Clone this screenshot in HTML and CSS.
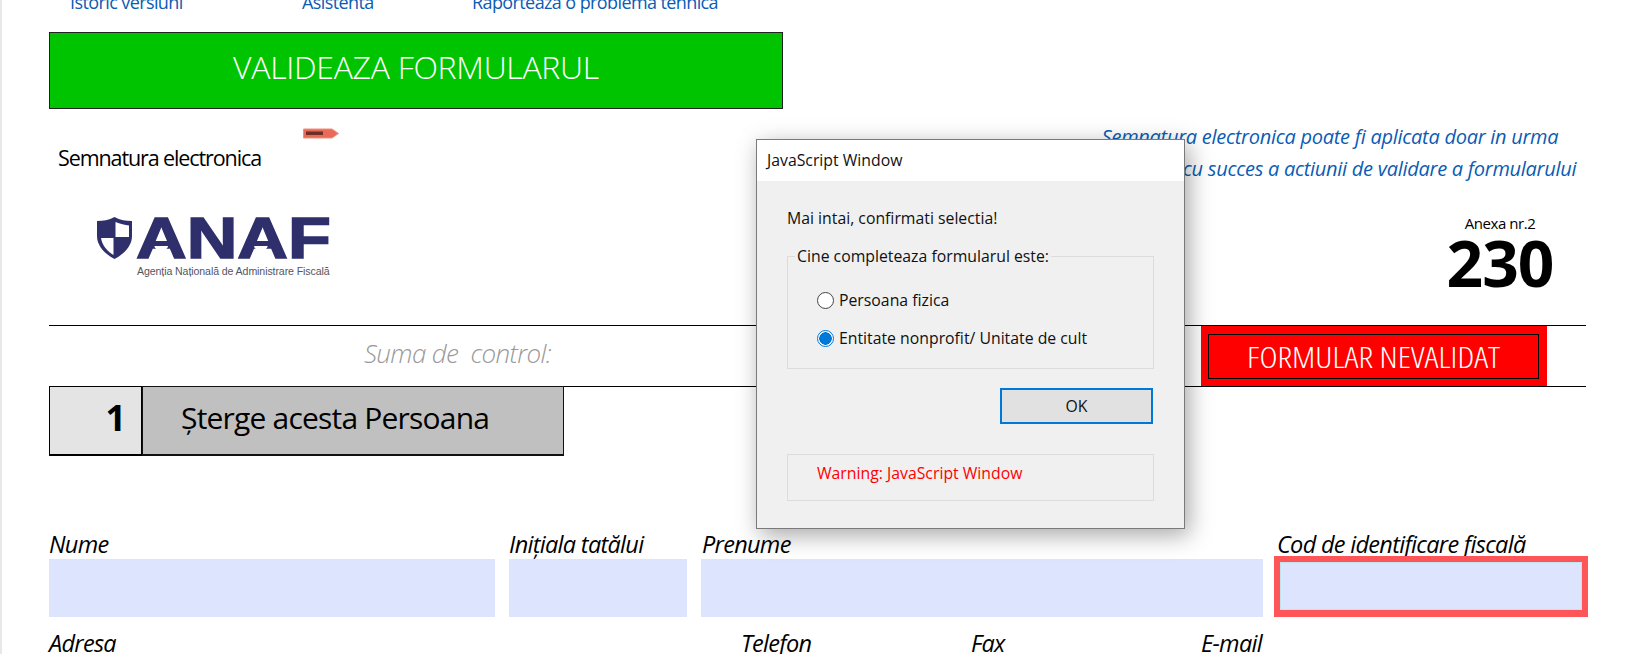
FILE: index.html
```html
<!DOCTYPE html>
<html lang="ro">
<head>
<meta charset="utf-8">
<title>Formular 230</title>
<link rel="stylesheet" href="styles.css">
</head>
<body>
<div class="page">
  <nav class="links">
    <a class="link link-a">Istoric versiuni</a>
    <a class="link link-b">Asistenta</a>
    <a class="link link-c">Raporteaza o problema tehnica</a>
  </nav>
  <div class="validate">VALIDEAZA FORMULARUL</div>
  <header class="head">
    <div class="head-left">
      <div class="sign">Semnatura electronica</div>
      <div class="logo">
        <svg class="shield" width="37" height="42" viewBox="0 0 37 42">
          <path d="M1 4 C7 4 13 3 18.5 0 C24 3 30 4 36 4 V19 C36 29 28 37 18.5 42 C9 37 1 29 1 19 Z" fill="#2e2f6b"/>
          <path d="M19.5 5 C24 7 29 8 33 8.500 V20 H19.5 Z" fill="#fff"/>
          <path d="M5 21 H17.500 V38 C11 34 6 28 5 21 Z" fill="#fff"/>
        </svg>
        <div class="brand">
          <div class="brand-mark">ANAF<i class="scale scale-1"></i><i class="scale scale-2"></i></div>
          <div class="brand-sub">Agenția Națională de Administrare Fiscală</div>
        </div>
      </div>
    </div>
    <svg class="tag" width="36" height="11" viewBox="0 0 36 11">
      <path d="M0.500 1 H29 L35.500 5.500 L29 10 H0.500 Z" fill="#ea6a58" stroke="#f08f7e"/>
      <rect x="3" y="3.500" width="17" height="3.500" fill="#6e3026"/>
    </svg>
    <div class="head-right">
      <p class="note">Semnatura electronica poate fi aplicata doar in urma<br>finalizarii&nbsp;&nbsp;&nbsp; cu succes a actiunii de validare a formularului</p>
      <div class="annex">
        <div class="annex-label">Anexa nr.2</div>
        <div class="annex-num">230</div>
      </div>
    </div>
  </header>
  <section class="band">
    <div class="control">Suma de&nbsp; control:</div>
    <div class="status"><div class="status-in"><span class="status-text">FORMULAR NEVALIDAT</span></div></div>
  </section>
  <section class="person">
    <div class="person-num">1</div>
    <div class="person-del">Șterge acesta Persoana</div>
  </section>
  <section class="fields">
    <div class="field f-name"><label class="lab">Nume</label><div class="input"></div></div>
    <div class="field f-init"><label class="lab">Inițiala tatălui</label><div class="input"></div></div>
    <div class="field f-first"><label class="lab">Prenume</label><div class="input"></div></div>
    <div class="field f-cif"><label class="lab lab-cif">Cod de identificare fiscală</label><div class="input-err"><div class="input-in"></div></div></div>
  </section>
  <section class="labels2">
    <span class="lab l-adr">Adresa</span>
    <span class="lab l-tel">Telefon</span>
    <span class="lab l-fax">Fax</span>
    <span class="lab l-mail">E-mail</span>
  </section>
</div>

<div class="dialog">
  <div class="dlg-title">JavaScript Window</div>
  <div class="dlg-body">
    <p class="dlg-msg">Mai intai, confirmati selectia!</p>
    <fieldset class="group">
      <legend class="legend">Cine completeaza formularul este:</legend>
      <div class="radio"><span class="dot"></span>Persoana fizica</div>
      <div class="radio"><span class="dot dot-on"></span>Entitate nonprofit/ Unitate de cult</div>
    </fieldset>
    <div class="dlg-actions"><button class="ok">OK</button></div>
    <div class="warn">Warning: JavaScript Window</div>
  </div>
</div>
</body>
</html>
```
FILE: styles.css
```css
* { box-sizing: border-box; }
html, body { margin: 0; height: 654px; overflow: hidden; background: #fff; }
body { position: relative; font-family: "Open Sans", sans-serif; color: #000; }

.page { width: 1643px; height: 654px; overflow: hidden; padding-left: 47px; border-left: 2px solid #e8e8e8; }

.links { display: flex; height: 32px; color: #0a5cb4; font-size: 18px; line-height: 24px; letter-spacing: -0.6px; }
.link { margin-top: -10px; }
.link-a { margin-left: 21px; width: 232px; }
.link-b { width: 170px; }

.validate { width: 734px; height: 77px; background: #00c400; border: 1px solid #222; color: #fff; font-size: 32px; font-weight: 350; display: flex; align-items: center; justify-content: center; padding-bottom: 8px; letter-spacing: -0.3px; }

.head { display: flex; height: 216px; width: 1537px; }
.head-left { width: 254px; flex: none; }
.sign { font-size: 21.5px; line-height: 28px; margin: 35px 0 0 9px; letter-spacing: -1.1px; }
.logo { display: flex; gap: 3px; margin: 45px 0 0 47px; width: 240px; }
.shield { flex: none; }
.brand { width: 192px; }
.brand-mark { position: relative; font-family: "Liberation Sans", sans-serif; font-weight: 700; font-size: 57px; line-height: 42px; height: 42px; color: #2e2f6b; -webkit-text-stroke: 1.5px #2e2f6b; transform: scaleX(1.23); transform-origin: left; white-space: nowrap; }
.scale { position: absolute; width: 11px; height: 4px; background: #fff; border-radius: 0 0 6px 6px; top: 29px; }
.scale-1 { left: 15px; }
.scale-2 { left: 96px; }
.brand-sub { font-family: "Liberation Sans", sans-serif; font-size: 10.6px; line-height: 14px; margin: 5px 0 0 1px; color: #55555f; white-space: nowrap; letter-spacing: -0.1px; }
.tag { flex: none; margin-top: 19px; }
.head-right { flex: 1; display: flex; flex-direction: column; align-items: flex-end; }
.note { margin: 12px -4px 0 0; width: 520px; text-align: center; font-size: 20px; line-height: 32px; font-style: italic; color: #0a5cb4; letter-spacing: -0.27px; }
.annex { width: 120px; margin: 28px 26px 0 0; text-align: center; }
.annex-label { font-size: 15px; line-height: 20px; letter-spacing: -0.45px; }
.annex-num { font-size: 64px; line-height: 62px; font-weight: 700; margin-top: -1px; letter-spacing: -1px; }

.band { display: flex; height: 62px; width: 1537px; border-top: 1px solid #000; border-bottom: 1px solid #000; }
.control { margin-left: 315px; width: 837px; font-size: 26px; line-height: 54px; font-style: italic; font-weight: 300; color: #999; letter-spacing: -0.65px; }
.status { width: 346px; background: #f00; padding: 8px 8px 7px 7px; }
.status-in { height: 100%; border: 1px solid #000; color: #fff; display: flex; align-items: center; justify-content: center; }
.status-text { display: block; font-size: 30px; font-weight: 300; font-stretch: 75%; transform: scaleX(1.145); white-space: nowrap; }

.person { display: flex; height: 70px; margin-top: -1px; }
.person-num { width: 93px; background: #e4e4e4; border: 1px solid #000; border-bottom-width: 2px; font-size: 36px; font-weight: 700; text-align: right; padding-right: 15px; line-height: 62px; }
.person-del { width: 422px; background: #c0c0c0; border: 1px solid #111; border-bottom-width: 2px; font-size: 30px; line-height: 62px; padding-left: 38px; letter-spacing: -0.8px; }

.fields { display: flex; margin-top: 74px; height: 87px; }
.field { display: flex; flex-direction: column; }
.lab { font-size: 23.5px; line-height: 28px; font-style: italic; display: block; height: 29px; white-space: nowrap; letter-spacing: -0.7px; }
.input { height: 58px; background: #dde4fd; }
.f-name { width: 446px; margin-right: 14px; }
.f-init { width: 178px; margin-right: 14px; }
.f-first { width: 562px; margin-right: 11px; }
.f-first .lab { padding-left: 1px; }
.f-cif { width: 314px; }
.lab-cif { padding-left: 3px; }
.input-err { height: 63px; margin-top: -2px; border: solid #fe5558; border-width: 6px 6px 7px; }
.input-in { height: 100%; background: #dde4fd; border: 1px solid #bfe4ee; }

.labels2 { display: flex; margin-top: 12px; }
.l-adr { width: 692px; }
.l-tel { width: 230px; }
.l-fax { width: 230px; }

.dialog { position: absolute; left: 756px; top: 139px; width: 429px; height: 390px; background: #f0f0f0; border: 1px solid #7a7a7a; box-shadow: 4px 6px 22px rgba(0,0,0,.35); font-size: 15.8px; color: #111; font-family: "Open Sans", sans-serif; }
.dlg-title { height: 41px; background: #fff; padding-left: 10px; line-height: 41px; }
.dlg-body { padding: 0 30px; }
.dlg-msg { margin: 0; padding-top: 26px; line-height: 22px; }
.group { margin: 16px 0 0; padding: 0 0 0 29px; height: 124px; border: 1px solid #dcdcdc; }
.legend { padding: 0 2px; margin-left: -22px; line-height: 22px; }
.radio { display: flex; align-items: center; height: 38px; }
.radio:first-of-type { margin-top: 14px; }
.dot { width: 17px; height: 17px; margin-right: 5px; border: 1.5px solid #444; border-radius: 50%; background: #fff; }
.dot-on { border-color: #0078d7; background: radial-gradient(circle, #0078d7 0 6px, #fff 6.5px); }
.dlg-actions { display: flex; justify-content: flex-end; margin-top: 19px; padding-right: 1px; }
.ok { width: 153px; height: 36px; background: #e1e1e1; border: 2px solid #0078d7; font: inherit; color: #111; padding: 0; }
.warn { margin-top: 30px; height: 47px; border: 1px solid #dcdcdc; color: #f00; padding-left: 29px; line-height: 36px; }
```
